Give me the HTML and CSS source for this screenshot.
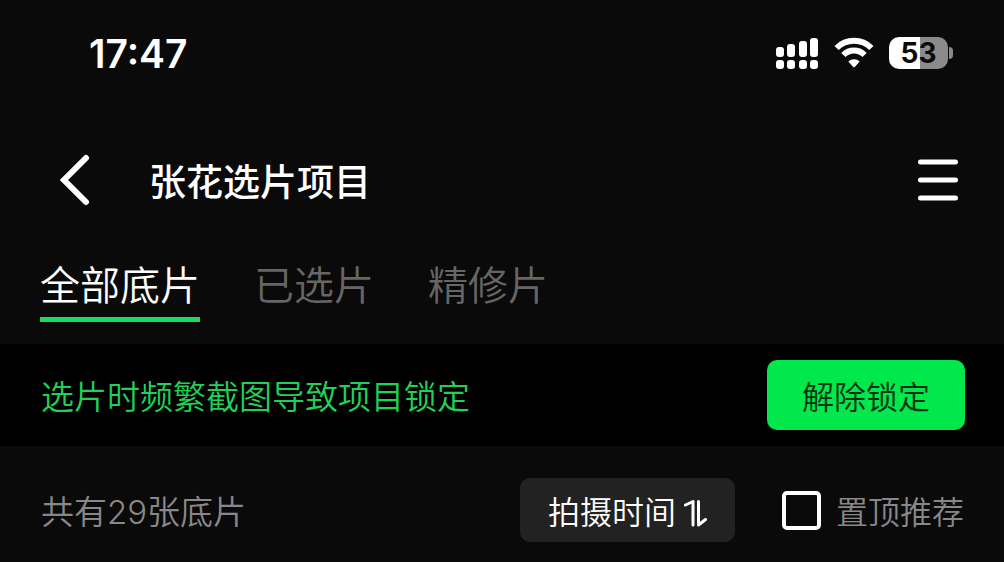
FILE: index.html
```
<!DOCTYPE html>
<html lang="zh-CN">
<head>
  <meta charset="utf-8">
  <meta name="viewport" content="width=device-width">
  <title>张花选片项目</title>
  <link rel="stylesheet" href="styles.css">
</head>
<body>
  <div class="status">
    <time class="clock">17:47</time>
    <div class="indicators">
      <svg class="signal" width="43" height="32" viewBox="0 0 43 32" fill="#fff" aria-hidden="true">
        <rect x="0" y="10" width="8" height="10" rx="3"/>
        <rect x="11" y="7" width="8" height="13" rx="3"/>
        <rect x="23" y="4" width="8" height="16" rx="3"/>
        <rect x="34" y="1" width="8" height="19" rx="3"/>
        <rect x="0" y="23" width="8" height="9" rx="3"/>
        <rect x="11" y="23" width="8" height="9" rx="3"/>
        <rect x="23" y="23" width="8" height="9" rx="3"/>
        <rect x="34" y="23" width="8" height="9" rx="3"/>
      </svg>
      <svg class="wifi" width="40" height="32" viewBox="0 0 40 32" fill="none" stroke="#fff" stroke-width="6" aria-hidden="true">
        <path d="M2.600 11a24.600 24.600 0 0 1 34.800 0"/>
        <path d="M9.400 18a15 15 0 0 1 21.200 0"/>
        <path d="M14.300 24.600a8.100 8.100 0 0 1 11.400 0L20.800 29.900a1.100 1.100 0 0 1-1.600 0z" fill="#fff" stroke="none"/>
      </svg>
      <div class="battery"><span class="level">53</span></div>
    </div>
  </div>

  <header class="navbar">
    <button class="icon" aria-label="返回">
      <svg width="32" height="52" viewBox="0 0 32 52" fill="none" stroke="#fff" stroke-width="6" stroke-linecap="round" stroke-linejoin="miter"><path d="M27 4L5 26l22 22"/></svg>
    </button>
    <h1>张花选片项目</h1>
    <button class="icon" aria-label="菜单">
      <svg width="42" height="42" viewBox="0 0 42 42" stroke="#fff" stroke-width="5" stroke-linecap="round"><path d="M3.500 3h35M3.500 21h35M3.500 39h35"/></svg>
    </button>
  </header>

  <nav class="tabs">
    <a class="active" href="#all" aria-current="page">全部底片</a>
    <a href="#selected">已选片</a>
    <a href="#retouched">精修片</a>
  </nav>

  <section class="notice">
    <p>选片时频繁截图导致项目锁定</p>
    <button class="unlock">解除锁定</button>
  </section>

  <section class="toolbar">
    <p class="count">共有<span class="num">29</span>张底片</p>
    <button class="sort">拍摄时间
      <svg width="23" height="34" viewBox="0 0 23 34" fill="none" stroke="#fff" stroke-width="3" stroke-linecap="round" stroke-linejoin="round" aria-hidden="true"><path d="M1.500 12L9 8.500V32M14.500 8.500V32l7-5.500"/></svg>
    </button>
    <label class="pin"><input type="checkbox"> 置顶推荐</label>
  </section>
</body>
</html>
```
FILE: styles.css
```
* { box-sizing: border-box; }
body { margin: 0; background: #0a0a0a; color: #fff; font-family: "Noto Sans CJK SC", sans-serif; font-weight: 350; }
h1, p { margin: 0; }
button { border: 0; padding: 0; background: none; color: inherit; font: inherit; cursor: pointer; }
a { color: inherit; text-decoration: none; }
svg { display: block; }

.clock, .level, .num { font-family: Inter, sans-serif; }
.num { font-weight: 300; line-height: 1; }

.status { display: flex; align-items: center; justify-content: space-between; height: 106px; padding: 0 51px 0 89px; }
.clock { font-size: 39px; font-weight: 600; }
.indicators { display: flex; align-items: center; gap: 15px; }
.battery { display: flex; align-items: center; gap: 1px; }
.battery::after { content: ""; width: 4px; height: 12px; border-radius: 0 4px 4px 0; background: #8a8a8a; }
.level { width: 59px; border-radius: 10px; background: linear-gradient(90deg, #fff 53%, #8a8a8a 53%); color: #0a0a0a; font-size: 28px; font-weight: 700; line-height: 32px; text-align: center; }

.navbar { display: flex; align-items: center; height: 148px; padding: 0 45px 0 59px; }
.navbar h1 { flex: 1; margin-left: 58px; font-size: 37px; font-weight: 500; line-height: 52px; }

.tabs { display: flex; gap: 54px; padding: 0 40px; font-size: 40px; line-height: 58px; color: #666; }
.tabs a { padding-bottom: 5px; border-bottom: 5px solid transparent; }
.tabs .active { color: #fff; border-color: #1bdc55; }

.notice { display: flex; align-items: center; justify-content: space-between; margin-top: 22px; padding: 16px 39px 16px 41px; background: #000; color: #1fd155; font-size: 33px; }
.unlock { padding: 0 35px; border-radius: 10px; background: #00e84c; color: #03300f; font-size: 32px; line-height: 70px; }

.toolbar { display: flex; align-items: center; padding: 32px 40px 20px 41px; font-size: 32px; line-height: 64px; color: #888; }
.count { flex: 1; font-size: 33px; }
.sort { display: flex; align-items: center; gap: 8px; padding: 0 28px; border-radius: 10px; background: #222; color: #fff; }
.pin { display: flex; align-items: center; gap: 15px; margin-left: 47px; }
.pin input { appearance: none; width: 39px; height: 39px; margin: 0; border: 4px solid #fff; border-radius: 5px; }
.pin input:checked { background: #00e84c; }
```
